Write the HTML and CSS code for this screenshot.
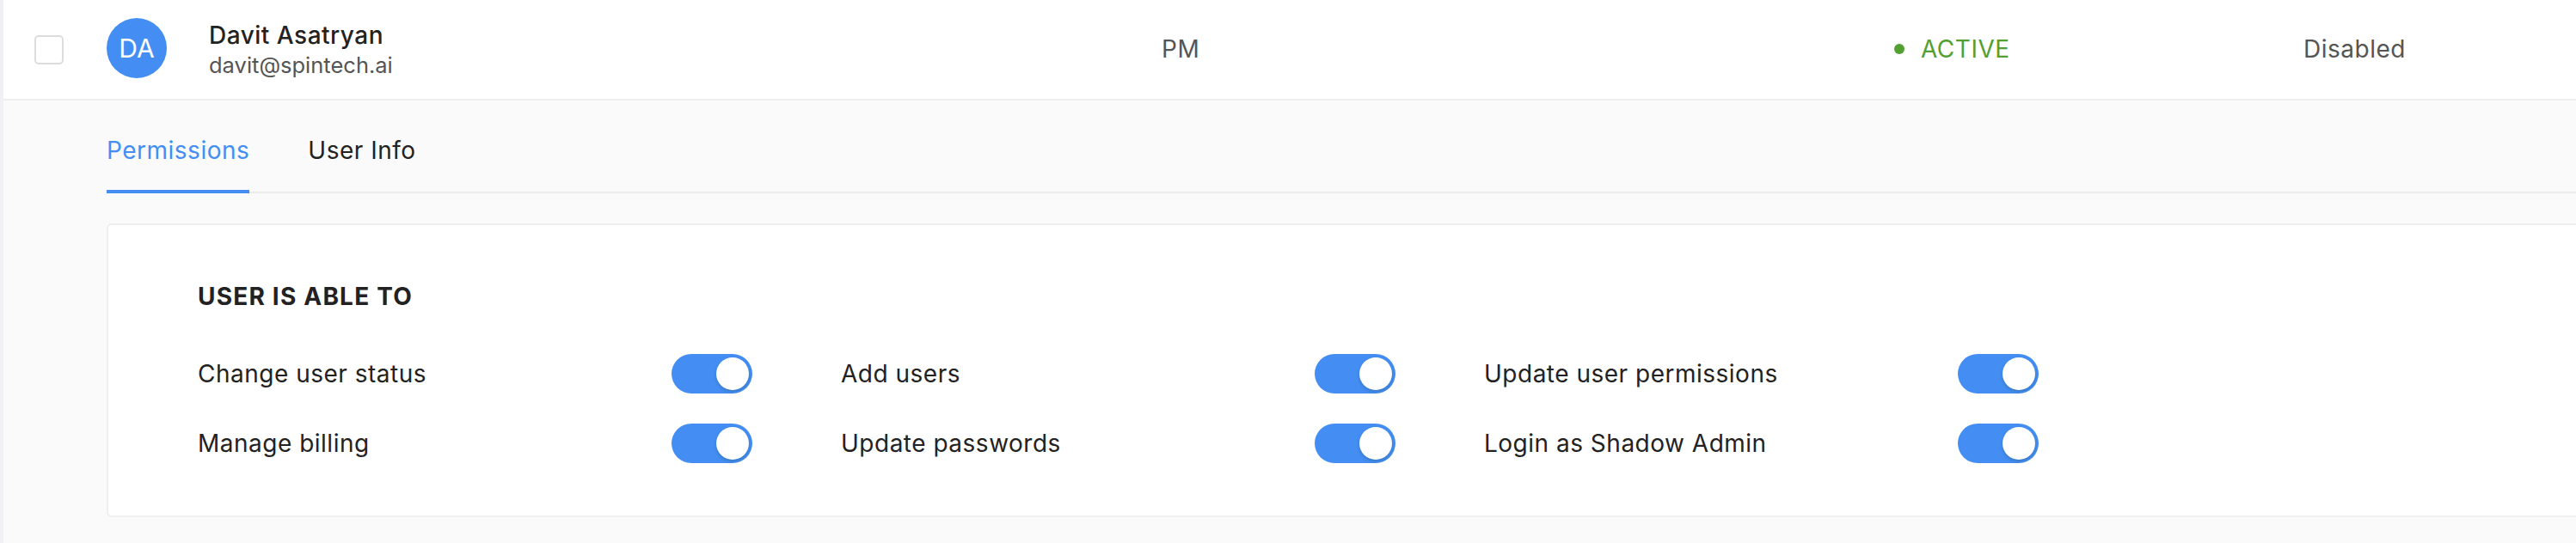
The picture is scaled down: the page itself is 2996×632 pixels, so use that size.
FILE: index.html
```html
<!DOCTYPE html>
<html lang="en">
<head>
  <meta charset="UTF-8" />
  <title>Users</title>
  <link rel="stylesheet" href="styles.css">
</head>
<body>
  <div class="page">
    <!-- user row -->
    <div class="user-row">
      <div class="cell cell-check"><span class="checkbox"></span></div>
      <div class="cell cell-user">
        <div class="avatar">DA</div>
        <div class="user-meta">
          <div class="user-name">Davit Asatryan</div>
          <div class="user-email">davit@spintech.ai</div>
        </div>
      </div>
      <div class="cell cell-text">PM</div>
      <div class="cell cell-status"><span class="status-dot"></span>ACTIVE</div>
      <div class="cell cell-text">Disabled</div>
    </div>

    <!-- expanded details -->
    <div class="details">
      <div class="tabs">
        <div class="tab active">Permissions</div>
        <div class="tab">User Info</div>
      </div>

      <div class="perm-card">
        <h3 class="perm-title">USER IS ABLE TO</h3>
        <div class="perm-grid">
          <div class="perm-item"><span>Change user status</span><span class="toggle on"></span></div>
          <div class="perm-item"><span>Add users</span><span class="toggle on"></span></div>
          <div class="perm-item"><span>Update user permissions</span><span class="toggle on"></span></div>
          <div class="perm-item"><span>Manage billing</span><span class="toggle on"></span></div>
          <div class="perm-item"><span>Update passwords</span><span class="toggle on"></span></div>
          <div class="perm-item"><span>Login as Shadow Admin</span><span class="toggle on"></span></div>
        </div>
      </div>
    </div>
  </div>
</body>
</html>
```

FILE: styles.css
```css
body {
  margin: 0;
  padding: 0;
  font-family: Inter, 'Noto Sans', sans-serif;
  color: #262626;
  background: #fafafa;
  overflow: hidden;
  letter-spacing: 0.5px;
}

.page {
  border-left: 4px solid #eff1f4;
  min-height: 632px;
  background: #fafafa;
}

.user-row {
  display: grid;
  grid-template-columns: 120px 1227px 852px 476px 1fr;
  align-items: center;
  height: 115px;
  background: #fff;
  border-bottom: 2px solid #efefef;
}

.cell {
  display: flex;
  align-items: center;
  font-size: 28px;
}

.cell-check {
  padding-left: 36px;
}

.checkbox {
  width: 30px;
  height: 30px;
  border: 2px solid #dcdcdc;
  border-radius: 5px;
  background: #fff;
}

.avatar {
  width: 70px;
  height: 70px;
  border-radius: 50%;
  background: #448ef3;
  color: #fff;
  font-size: 30px;
  letter-spacing: 0;
  display: flex;
  align-items: center;
  justify-content: center;
  margin-right: 49px;
  margin-top: -4px;
}

.user-name {
  font-size: 28px;
  font-weight: 500;
  line-height: 36px;
  color: #222;
}

.user-email {
  font-size: 25.5px;
  line-height: 34px;
  letter-spacing: 0;
  color: #555;
}

.cell-text {
  color: #555;
  margin-top: -2px;
}

.cell-status {
  color: #52a032;
  margin-top: -2px;
}

.status-dot {
  width: 12px;
  height: 12px;
  border-radius: 50%;
  background: #52a032;
  margin-right: 19px;
}

.details {
  padding: 38px 0 0 120px;
}

.tabs {
  display: flex;
  gap: 68px;
  border-bottom: 2px solid #ececec;
  margin-right: -20px;
}

.tab {
  font-size: 28px;
  line-height: 40px;
  padding-bottom: 26px;
  border-bottom: 4px solid transparent;
  margin-bottom: -2px;
  color: #222;
}

.tab.active {
  color: #448ef3;
  border-bottom-color: #448ef3;
}

.perm-card {
  margin: 35px -20px 0 0;
  background: #fff;
  border: 2px solid #efefef;
  border-radius: 6px;
  padding: 63px 0 61px 104px;
}

.perm-title {
  margin: 0 0 47px;
  font-size: 28px;
  line-height: 40px;
  font-weight: 700;
  letter-spacing: 1.2px;
  color: #222;
}

.perm-grid {
  display: grid;
  grid-template-columns: repeat(3, 645px);
  column-gap: 103px;
  row-gap: 35px;
}

.perm-item {
  display: flex;
  align-items: center;
  justify-content: space-between;
  height: 46px;
  font-size: 28px;
  line-height: 40px;
  color: #222;
}

.toggle {
  position: relative;
  width: 94px;
  height: 46px;
  border-radius: 23px;
  background: #bfbfbf;
}

.toggle.on {
  background: #448ef3;
}

.toggle::after {
  content: '';
  position: absolute;
  top: 4px;
  left: 4px;
  width: 38px;
  height: 38px;
  border-radius: 50%;
  background: #fff;
  box-shadow: 0 2px 4px rgba(0, 35, 11, 0.2);
}

.toggle.on::after {
  left: auto;
  right: 4px;
}
```
